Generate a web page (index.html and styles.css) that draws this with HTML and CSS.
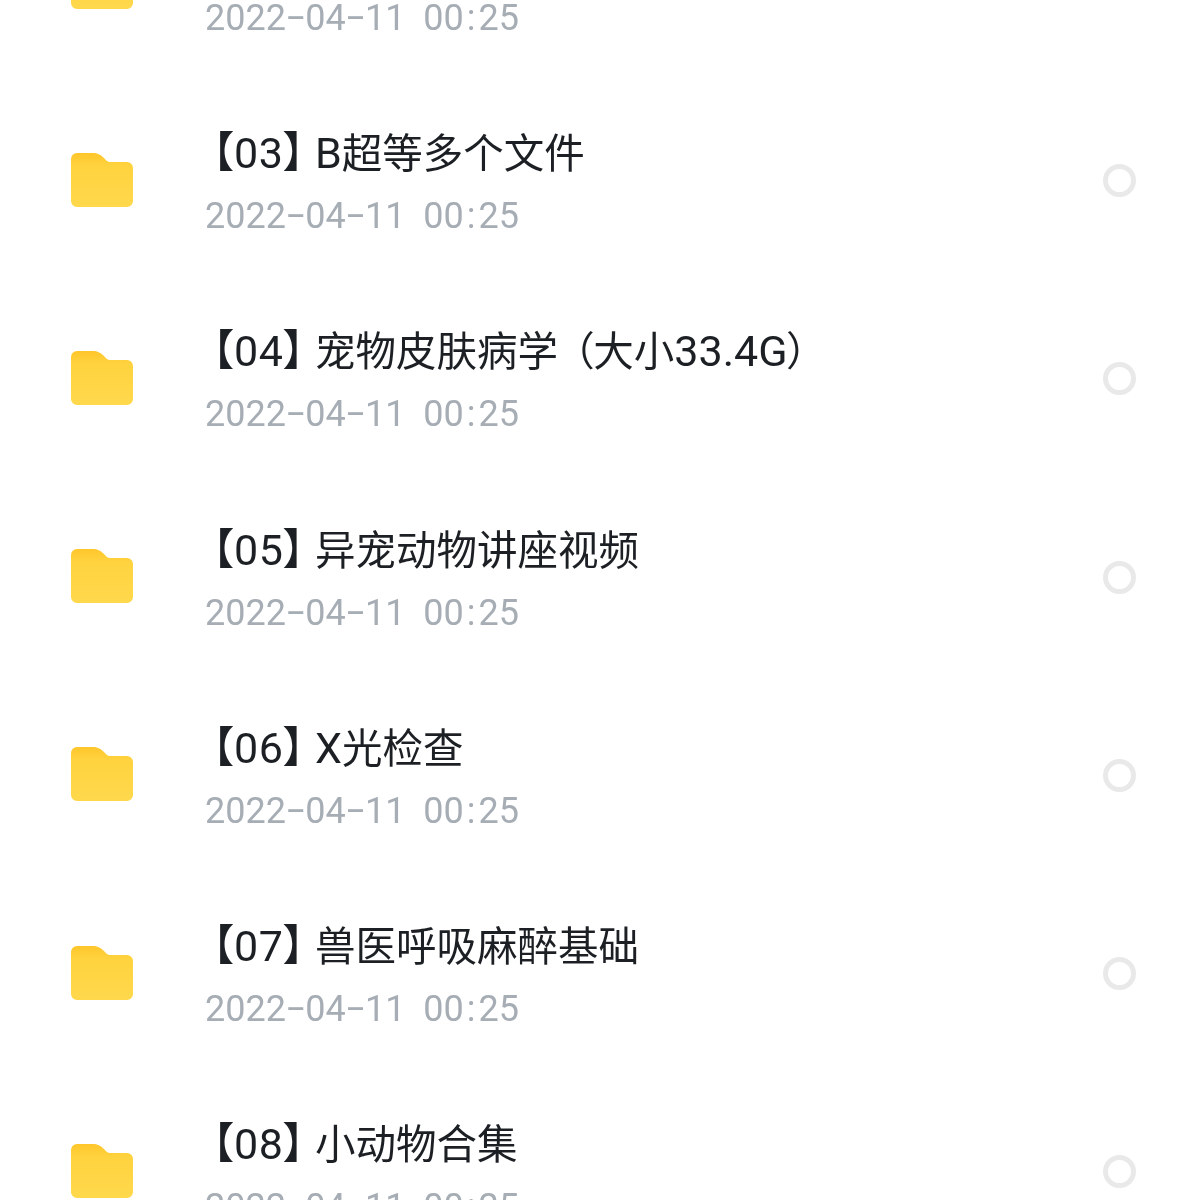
FILE: index.html
```html
<!DOCTYPE html>
<html>

<head>
    <meta charset="utf-8">
    <title>文件列表</title>
    <link rel="stylesheet" href="styles.css">
</head>

<body>
    <svg class="defs" width="0" height="0">
        <linearGradient id="folderFill" x1="0" y1="0" x2="0" y2="1">
            <stop offset="0" stop-color="#ffc62b" />
            <stop offset="0.24" stop-color="#ffd33f" />
            <stop offset="1" stop-color="#ffd84c" />
        </linearGradient>
        <symbol id="folder" viewBox="0 0 62 54">
            <path fill="url(#folderFill)" d="M0 6a6 6 0 0 1 6-6h15c6 0 9 2 12 5 2 2 3 4 7 4h16a6 6 0 0 1 6 6v33a6 6 0 0 1-6 6H6a6 6 0 0 1-6-6z" />
        </symbol>
    </svg>

    <ul class="list">
        <li class="row">
            <svg class="folder"><use href="#folder" /></svg>
            <div class="info">
                <div class="name"></div>
                <div class="time">2022<span class="dash">–</span>04<span class="dash">–</span>11&nbsp; 00<span class="colon">:</span>25</div>
            </div>
            <span class="radio"></span>
        </li>
        <li class="row">
            <svg class="folder"><use href="#folder" /></svg>
            <div class="info">
                <div class="name"><span class="tag">【03】</span><span class="lat">B</span>超等多个文件</div>
                <div class="time">2022<span class="dash">–</span>04<span class="dash">–</span>11&nbsp; 00<span class="colon">:</span>25</div>
            </div>
            <span class="radio"></span>
        </li>
        <li class="row">
            <svg class="folder"><use href="#folder" /></svg>
            <div class="info">
                <div class="name"><span class="tag">【04】</span>宠物皮肤病学 （大小<span class="lat">33.4G</span>）</div>
                <div class="time">2022<span class="dash">–</span>04<span class="dash">–</span>11&nbsp; 00<span class="colon">:</span>25</div>
            </div>
            <span class="radio"></span>
        </li>
        <li class="row">
            <svg class="folder"><use href="#folder" /></svg>
            <div class="info">
                <div class="name"><span class="tag">【05】</span>异宠动物讲座视频</div>
                <div class="time">2022<span class="dash">–</span>04<span class="dash">–</span>11&nbsp; 00<span class="colon">:</span>25</div>
            </div>
            <span class="radio"></span>
        </li>
        <li class="row">
            <svg class="folder"><use href="#folder" /></svg>
            <div class="info">
                <div class="name"><span class="tag">【06】</span><span class="lat">X</span>光检查</div>
                <div class="time">2022<span class="dash">–</span>04<span class="dash">–</span>11&nbsp; 00<span class="colon">:</span>25</div>
            </div>
            <span class="radio"></span>
        </li>
        <li class="row">
            <svg class="folder"><use href="#folder" /></svg>
            <div class="info">
                <div class="name"><span class="tag">【07】</span>兽医呼吸麻醉基础</div>
                <div class="time">2022<span class="dash">–</span>04<span class="dash">–</span>11&nbsp; 00<span class="colon">:</span>25</div>
            </div>
            <span class="radio"></span>
        </li>
        <li class="row">
            <svg class="folder"><use href="#folder" /></svg>
            <div class="info">
                <div class="name"><span class="tag">【08】</span>小动物合集</div>
                <div class="time">2022<span class="dash">–</span>04<span class="dash">–</span>11&nbsp; 00<span class="colon">:</span>25</div>
            </div>
            <span class="radio"></span>
        </li>
    </ul>
</body>

</html>
```

FILE: styles.css
```css
html, body {
    margin: 0;
    padding: 0;
    height: 1200px;
    overflow: hidden;
    background: #fff;
}

.defs {
    display: block;
    height: 0;
}

.list {
    list-style: none;
    margin: -116.5px 0 0;
    padding: 0;
    filter: blur(0.5px);
}

.row {
    display: flex;
    align-items: center;
    height: 198.2px;
    padding: 0 64px 0 71px;
}

.folder {
    width: 62px;
    height: 54px;
    margin-bottom: 2px;
    flex: none;
}

.info {
    flex: 1;
    margin-left: 72px;
    padding-top: 9px;
}

.name {
    height: 62px;
    line-height: 60px;
    font-family: Roboto, "Noto Sans CJK SC", sans-serif;
    font-size: 40.5px;
    color: #1c1f23;
    font-feature-settings: "palt";
    word-spacing: 5px;
    white-space: nowrap;
}

.tag {
    display: inline-block;
    box-sizing: border-box;
    width: 110px;
    padding-left: 7px;
    font-size: 43px;
    letter-spacing: 0.5px;
}

.lat {
    font-size: 43px;
}

.time {
    height: 62px;
    line-height: 62px;
    font-family: Roboto, sans-serif;
    font-size: 36px;
    color: #a6adb4;
    white-space: nowrap;
}

.dash {
    font-size: 30px;
    font-weight: 500;
    line-height: 1;
    vertical-align: 2px;
}

.colon {
    margin: 0 3px;
}

.radio {
    width: 33px;
    height: 33px;
    box-sizing: border-box;
    border: 5px solid #e9e9e9;
    border-radius: 50%;
    flex: none;
}
```
